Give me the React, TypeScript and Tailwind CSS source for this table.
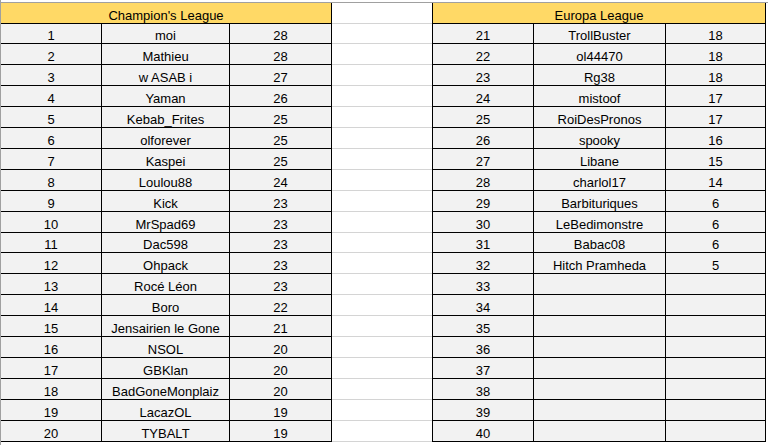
const left: [number, string, number][] = [
  [1, "moi", 28],
  [2, "Mathieu", 28],
  [3, "w ASAB i", 27],
  [4, "Yaman", 26],
  [5, "Kebab_Frites", 25],
  [6, "olforever", 25],
  [7, "Kaspei", 25],
  [8, "Loulou88", 24],
  [9, "Kick", 23],
  [10, "MrSpad69", 23],
  [11, "Dac598", 23],
  [12, "Ohpack", 23],
  [13, "Rocé Léon", 23],
  [14, "Boro", 22],
  [15, "Jensairien le Gone", 21],
  [16, "NSOL", 20],
  [17, "GBKlan", 20],
  [18, "BadGoneMonplaiz", 20],
  [19, "LacazOL", 19],
  [20, "TYBALT", 19],
];

const right: [number, string, string][] = [
  [21, "TrollBuster", "18"],
  [22, "ol44470", "18"],
  [23, "Rg38", "18"],
  [24, "mistoof", "17"],
  [25, "RoiDesPronos", "17"],
  [26, "spooky", "16"],
  [27, "Libane", "15"],
  [28, "charlol17", "14"],
  [29, "Barbituriques", "6"],
  [30, "LeBedimonstre", "6"],
  [31, "Babac08", "6"],
  [32, "Hitch Pramheda", "5"],
  [33, "", ""],
  [34, "", ""],
  [35, "", ""],
  [36, "", ""],
  [37, "", ""],
  [38, "", ""],
  [39, "", ""],
  [40, "", ""],
];

const cell = "flex items-end justify-center border-r border-b border-black bg-[#f2f2f2] leading-[15px] whitespace-nowrap";

export default function App() {
  return (
    <div
      className="flex h-[445px] w-[768px] flex-col overflow-hidden border-l border-[#a0a0a0] bg-white text-[13px] text-black"
      style={{ fontFamily: '"Liberation Sans", Arial, sans-serif' }}
    >
      <div className="h-[3px] shrink-0 border-b border-[#a0a0a0]" />

      <div className="flex h-[21px] shrink-0">
        <div className="flex w-[331px] items-end justify-center border-r border-b border-black bg-[#ffd966] leading-[15px]">
          Champion's League
        </div>
        <div className="w-[100px] border-b border-[#d4d4d4]" />
        <div className="flex w-[334px] items-end justify-center border-x border-b border-black bg-[#ffd966] leading-[15px]">
          Europa League
        </div>
        <div className="flex-1" />
      </div>

      {left.map((l, i) => {
        const r = right[i];
        const h = i === 0 || i === 10 ? "h-[20px]" : "h-[21px]";
        return (
          <div key={l[0]} className={`flex shrink-0 ${h}`}>
            <div className={`${cell} w-[101px]`}>{l[0]}</div>
            <div className={`${cell} w-[128px]`}>{l[1]}</div>
            <div className={`${cell} w-[102px]`}>{l[2]}</div>
            <div className="w-[100px] border-b border-[#d4d4d4]" />
            <div className={`${cell} w-[102px] border-l`}>{r[0]}</div>
            <div className={`${cell} w-[132px]`}>{r[1]}</div>
            <div className={`${cell} w-[100px]`}>{r[2]}</div>
            <div className="flex-1" />
          </div>
        );
      })}
    </div>
  );
}
